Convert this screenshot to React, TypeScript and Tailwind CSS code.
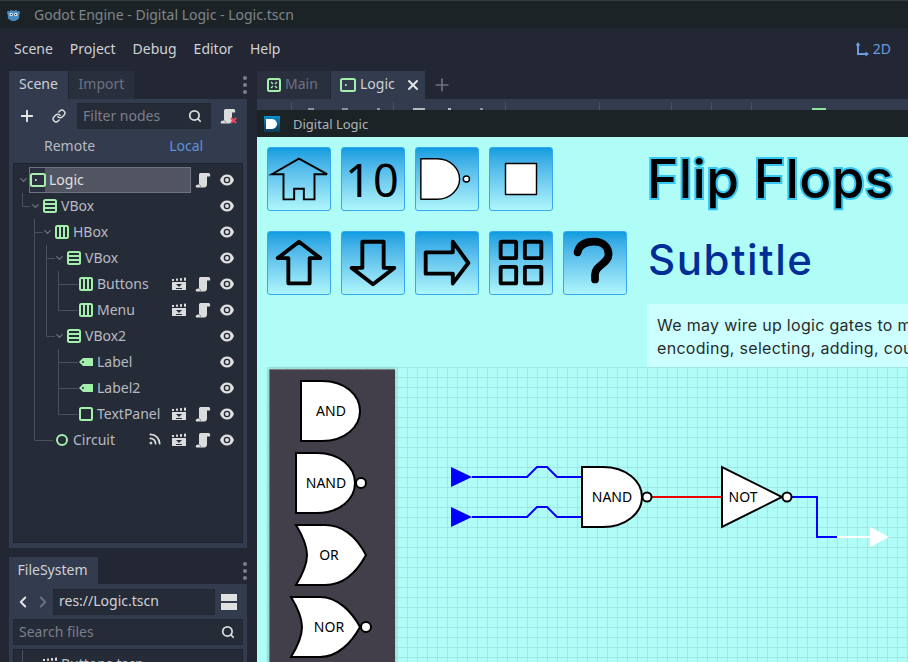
import { ChevronDown, ChevronLeft, ChevronRight, Link, Plus, Rss, Search, X } from "lucide-react";
import type { ReactNode } from "react";

const GREEN = "#a5efac";

function Control() {
  return (
    <svg width="16" height="16" viewBox="0 0 16 16" fill="none" stroke={GREEN} strokeWidth="2">
      <rect x="1" y="2" width="14" height="12" rx="1.5" />
      <rect x="5" y="7" width="1.6" height="2" fill={GREEN} stroke="none" />
    </svg>
  );
}

function VBoxIcon() {
  return (
    <svg width="16" height="16" viewBox="0 0 16 16" fill="none" stroke={GREEN} strokeWidth="2">
      <rect x="2" y="2" width="12" height="12" rx="1.5" />
      <path d="M2 6h12M2 10h12" />
    </svg>
  );
}

function HBoxIcon() {
  return (
    <svg width="16" height="16" viewBox="0 0 16 16" fill="none" stroke={GREEN} strokeWidth="2">
      <rect x="2" y="2" width="12" height="12" rx="1.5" />
      <path d="M6 2v12M10 2v12" />
    </svg>
  );
}

function LabelIcon() {
  return (
    <svg width="16" height="16" viewBox="0 0 16 16">
      <path d="M1 8l4-4h9.500a.5.5 0 0 1 .5.5v7a.5.5 0 0 1-.5.5H5z" fill={GREEN} />
      <circle cx="5" cy="8" r="1" fill="#262b38" />
    </svg>
  );
}

function PanelIcon() {
  return (
    <svg width="16" height="16" viewBox="0 0 16 16" fill="none" stroke={GREEN} strokeWidth="2">
      <rect x="2" y="2" width="12" height="12" rx="1.5" />
    </svg>
  );
}

function CircleIcon() {
  return (
    <svg width="16" height="16" viewBox="0 0 16 16" fill="none" stroke={GREEN} strokeWidth="2">
      <circle cx="8" cy="8" r="5" />
    </svg>
  );
}

function Eye() {
  return (
    <svg width="16" height="16" viewBox="0 0 16 16" fill="none">
      <path d="M1 8c1.500-3.700 4-5.500 7-5.500s5.500 1.800 7 5.500c-1.500 3.700-4 5.500-7 5.500s-5.500-1.800-7-5.500z" fill="#e0e0e0" />
      <circle cx="8" cy="8" r="3.300" fill="#262b38" />
      <circle cx="8" cy="8" r="1.900" fill="#e0e0e0" />
    </svg>
  );
}

function Script() {
  return (
    <svg width="16" height="16" viewBox="0 0 16 16">
      <path
        d="M5.500 1H13.500C15 1 15.500 2.500 15 4.500H12V12.500C12 14 11 15.500 9.500 15.500H1.500C.7 15.500 .5 14.500 1 13.500C1.500 12.700 3 12.500 4 12.500V3C4 2 4.500 1 5.500 1Z"
        fill="#dcdcdc"
      />
      <path d="M4 12.500c1 .2 1.600 1 1.800 3" stroke="#8d8d8d" strokeWidth="1" fill="none" />
    </svg>
  );
}

function Clapper() {
  return (
    <svg width="16" height="16" viewBox="0 0 16 16">
      <path d="M1 3h2v2H1zM5 2.700l2-.3v2.300H5zM9 2.200l2-.3v2.800H9zM13 1.700l2-.3v3.300h-2z" fill="#dcdcdc" />
      <path d="M1 6h14v8H1z" fill="#dcdcdc" />
      <path d="M5 8h6l-3 3z" fill="#262b38" />
      <path d="M5 12h6v1H5z" fill="#262b38" />
    </svg>
  );
}

function Dots() {
  return (
    <div className="flex flex-col gap-[3px]">
      <span className="h-[4px] w-[4px] rounded-full bg-[#7a7f8b]" />
      <span className="h-[4px] w-[4px] rounded-full bg-[#7a7f8b]" />
      <span className="h-[4px] w-[4px] rounded-full bg-[#7a7f8b]" />
    </div>
  );
}

type Row = {
  label: string;
  pad: string;
  icon: ReactNode;
  arrow?: boolean;
  signal?: boolean;
  scene?: boolean;
  script?: boolean;
  selected?: boolean;
};

const rows: Row[] = [
  { label: "Logic", pad: "pl-1", icon: <Control />, arrow: true, script: true, selected: true },
  { label: "VBox", pad: "pl-4", icon: <VBoxIcon />, arrow: true },
  { label: "HBox", pad: "pl-7", icon: <HBoxIcon />, arrow: true },
  { label: "VBox", pad: "pl-10", icon: <VBoxIcon />, arrow: true },
  { label: "Buttons", pad: "pl-[52px]", icon: <HBoxIcon />, scene: true, script: true },
  { label: "Menu", pad: "pl-[52px]", icon: <HBoxIcon />, scene: true, script: true },
  { label: "VBox2", pad: "pl-10", icon: <VBoxIcon />, arrow: true },
  { label: "Label", pad: "pl-[52px]", icon: <LabelIcon /> },
  { label: "Label2", pad: "pl-[52px]", icon: <LabelIcon /> },
  { label: "TextPanel", pad: "pl-[52px]", icon: <PanelIcon />, scene: true, script: true },
  { label: "Circuit", pad: "pl-7", icon: <CircleIcon />, signal: true, scene: true, script: true },
];

function TreeRow({ row }: { row: Row }) {
  return (
    <div className={`relative flex h-[26px] items-center pr-[3px] ${row.pad}`}>
      {row.selected && (
        <div className="absolute top-0 bottom-0 left-[15px] w-[162px] border border-[#6e7483] bg-[#515561]">
          <div className="h-full w-[15px] bg-[#2b3040]" />
        </div>
      )}
      <span className="relative flex w-[11px] justify-center">
        {row.arrow && <ChevronDown size={12} strokeWidth={3} className="text-[#6d717c]" />}
      </span>
      <span className="relative ml-px">{row.icon}</span>
      <span className={`relative ml-[3px] pb-px ${row.selected ? "text-[#e0e0e0]" : "text-[#b8bac1]"}`}>{row.label}</span>
      <div className="relative ml-auto flex">
        {row.signal && (
          <span className="flex w-6 justify-center">
            <Rss size={14} strokeWidth={3} className="text-[#dcdcdc]" />
          </span>
        )}
        {row.scene && (
          <span className="flex w-6 justify-center">
            <Clapper />
          </span>
        )}
        {row.script && (
          <span className="flex w-6 justify-center">
            <Script />
          </span>
        )}
        <span className="flex w-6 justify-center">
          <Eye />
        </span>
      </div>
    </div>
  );
}

function SceneDock() {
  return (
    <section className="flex h-[477px] shrink-0 flex-col">
      <div className="flex h-[28px] items-center">
        <div className="flex h-full w-[59px] items-center justify-center bg-[#333b4f] pb-[2px] text-[#cfd1d6]">Scene</div>
        <div className="ml-px flex h-full w-[65px] items-center justify-center bg-[#2a2f3e] pb-[2px] text-[#6d7282]">Import</div>
        <div className="ml-auto">
          <Dots />
        </div>
      </div>
      <div className="flex flex-1 flex-col bg-[#333b4f] px-[4px] pb-[5px]">
        <div className="flex h-[34px] items-center">
          <Plus size={18} strokeWidth={2.500} className="ml-[5px] text-[#e6e6e6]" />
          <Link size={14} strokeWidth={2.500} className="ml-[16px] text-[#dcdcdc]" />
          <div className="ml-[11px] flex h-[26px] w-[134px] items-center justify-between border border-[#232733] bg-[#262b38] pr-[8px] pl-[5px] text-[#7b7f8c]">
            <span>Filter nodes</span>
            <Search size={14} strokeWidth={3} className="text-[#dcdcdc]" />
          </div>
          <div className="relative ml-[9px]">
            <Script />
            <svg className="absolute right-[-1px] bottom-[0px]" width="7" height="7" viewBox="0 0 7 7" stroke="#e8495e" strokeWidth="2">
              <path d="M1 1L6 6M6 1L1 6" />
            </svg>
          </div>
        </div>
        <div className="flex h-[30px] items-center pb-[4px]">
          <span className="ml-[31px] text-[#b8bac1]">Remote</span>
          <span className="ml-[74px] text-[#5f90d8]">Local</span>
        </div>
        <div className="relative flex-1 border border-[#1f2330] bg-[#262b38] pt-[3px]">
          <svg
            className="absolute top-0 left-0 overflow-visible"
            width="230"
            height="300"
            viewBox="14 164 230 300"
            fill="none"
            stroke="#4b505c"
          >
            <path d="M22.500 193V206.500H30M34.500 219V440.500H53M34.500 232.500H43M46.500 245V336.500H55M46.500 258.500H55M58.500 271V310.500H78M58.500 284.500H78M58.500 349V414.500H78M58.500 362.500H78M58.500 388.500H78" />
          </svg>
          {rows.map((row, i) => (
            <TreeRow key={i} row={row} />
          ))}
        </div>
      </div>
    </section>
  );
}

function FileDock() {
  return (
    <section className="mt-[9px] flex min-h-0 flex-1 flex-col overflow-hidden">
      <div className="flex h-[27px] shrink-0 items-center">
        <div className="flex h-full w-[89px] items-center justify-center bg-[#333b4f] pr-[2px] pb-[2px] text-[#cfd1d6]">FileSystem</div>
        <div className="ml-auto">
          <Dots />
        </div>
      </div>
      <div className="flex flex-1 flex-col bg-[#333b4f] px-[4px]">
        <div className="flex h-[35px] shrink-0 items-center">
          <ChevronLeft size={18} strokeWidth={2.500} className="ml-px text-[#e6e6e6]" />
          <ChevronRight size={18} strokeWidth={2.500} className="ml-[2px] text-[#6d7282]" />
          <div className="ml-px flex h-[26px] w-[162px] items-center border border-[#232733] bg-[#262b38] pb-px pl-[5px] text-[#d0d2d7]">
            res://Logic.tscn
          </div>
          <div className="ml-[6px] flex flex-col gap-[2px]">
            <span className="h-[7px] w-[16px] bg-[#e0e0e0]" />
            <span className="h-[7px] w-[16px] bg-[#e0e0e0]" />
          </div>
        </div>
        <div className="flex h-[26px] shrink-0 items-center justify-between border border-[#232733] bg-[#262b38] pr-[7px] pb-px pl-[5px] text-[#7b7f8c]">
          <span>Search files</span>
          <Search size={14} strokeWidth={3} className="text-[#dcdcdc]" />
        </div>
        <div className="relative mt-[4px] flex-1 border border-[#1f2330] bg-[#262b38] pt-[6px] pl-[28px]">
          <span className="absolute top-0 bottom-0 left-[8px] w-px bg-[#4b505c]" />
          <div className="flex items-center gap-[3px] text-[#b8bac1]">
            <Clapper />
            <span>Buttons.tscn</span>
          </div>
        </div>
      </div>
    </section>
  );
}

function GameButton({ children }: { children: ReactNode }) {
  return (
    <button className="flex h-[64px] w-[64px] items-center justify-center overflow-hidden rounded-[3px] border border-[#38a8ee] bg-gradient-to-b from-[#0a9de0] to-[#aef6fb]">
      {children}
    </button>
  );
}

function Ico({ children }: { children: ReactNode }) {
  return (
    <svg width="64" height="64" viewBox="0 0 64 64" fill="none" stroke="#000" strokeLinejoin="round">
      {children}
    </svg>
  );
}

function ButtonRows() {
  return (
    <div className="flex flex-col gap-[20px]">
      <div className="flex gap-[10px]">
        <GameButton>
          <Ico>
            <path strokeWidth="2" strokeLinejoin="miter" d="M32 11L4 27H16V53H27V42H37V53H48V27H61Z" />
          </Ico>
        </GameButton>
        <GameButton>
          <span className="text-[45px] leading-none tracking-[2px] text-black">10</span>
        </GameButton>
        <GameButton>
          <Ico>
            <path strokeWidth="1.500" fill="#fff" d="M5 11H22C36 11 45 22 45 32C45 42 36 53 22 53H5Z" />
            <circle cx="52" cy="32" r="3.200" fill="#fff" strokeWidth="1.500" />
          </Ico>
        </GameButton>
        <GameButton>
          <Ico>
            <rect x="16" y="16" width="32" height="32" fill="#fff" strokeWidth="1.500" />
          </Ico>
        </GameButton>
      </div>
      <div className="flex gap-[10px]">
        <GameButton>
          <Ico>
            <path strokeWidth="4" d="M32 10L10 27H21V53H43V27H54Z" />
          </Ico>
        </GameButton>
        <GameButton>
          <Ico>
            <path strokeWidth="4" d="M21 10H43V37H54L32 54L10 37H21Z" />
          </Ico>
        </GameButton>
        <GameButton>
          <Ico>
            <path strokeWidth="4" d="M10 21H38V10L54 32L38 53V43H10Z" />
          </Ico>
        </GameButton>
        <GameButton>
          <Ico>
            <g strokeWidth="4">
              <rect x="11" y="10" width="16" height="17" rx="1" />
              <rect x="36" y="10" width="17" height="17" rx="1" />
              <rect x="11" y="36" width="16" height="17" rx="1" />
              <rect x="36" y="36" width="17" height="17" rx="1" />
            </g>
          </Ico>
        </GameButton>
        <GameButton>
          <Ico>
            <path strokeWidth="8" strokeLinecap="round" d="M14 21C16 12 24 10 31 10C41 10 46 16 46 23C46 33 32 34 32 44V49" />
          </Ico>
        </GameButton>
      </div>
    </div>
  );
}

function Gate({ children, label, x, y }: { children: ReactNode; label: string; x: number; y: number }) {
  return (
    <svg width="90" height="60" viewBox={`287 ${y} 90 60`} className="overflow-visible" fill="#fff" stroke="#000" strokeWidth="2">
      {children}
      <text
        x={x}
        y={y + 35}
        textAnchor="middle"
        fill="#000"
        stroke="none"
        fontSize="14"
        fontFamily="Noto Sans, sans-serif"
      >
        {label}
      </text>
    </svg>
  );
}

function Palette() {
  return (
    <aside className="relative mt-[2px] ml-[2px] flex h-full w-[126px] flex-col items-center gap-[12px] border-t border-l border-[#7b7a80] bg-[#423f4a] pt-[11px] pr-[2px] shadow-[0_0_3px_rgba(0,0,0,0.3)]">
      <Gate label="AND" x={331} y={381}>
        <path d="M301 381H322C345 381 360 395 360 411C360 427 345 441 322 441H301Z" />
      </Gate>
      <Gate label="NAND" x={326} y={453}>
        <path d="M296 453H317C340 453 355 467 355 483C355 499 340 513 317 513H296Z" />
        <circle cx="361" cy="483" r="5" />
      </Gate>
      <Gate label="OR" x={329} y={525}>
        <path d="M296 525H325C345 525 358 540 366 555C358 570 345 585 325 585H296C304 572 307 563 307 555C307 547 304 538 296 525Z" />
      </Gate>
      <Gate label="NOR" x={329} y={597}>
        <path d="M291 597H320C338 597 352 612 360 627C352 642 338 657 320 657H291C299 644 302 635 302 627C302 619 299 610 291 597Z" />
        <circle cx="366" cy="627" r="5" />
      </Gate>
    </aside>
  );
}

function Circuit() {
  return (
    <svg
      className="absolute top-0 left-0"
      width="641"
      height="295"
      viewBox="267 367 641 295"
      fill="none"
      strokeLinejoin="miter"
    >
      <g stroke="#0000ff" strokeWidth="2">
        <path d="M472 477H527L537 467H547L557 477H582" />
        <path d="M472 517H527L537 507H547L557 517H582" />
        <path d="M792 497H817V537H837" />
      </g>
      <path d="M451 467V487L472 477Z M451 507V527L472 517Z" fill="#0000ff" />
      <path d="M652 497H722" stroke="#ee0000" strokeWidth="2" />
      <path d="M837 537H870" stroke="#fff" strokeWidth="2" />
      <path d="M870 527V547L889 537Z" fill="#fff" />
      <g fill="#fff" stroke="#000" strokeWidth="2">
        <path d="M582 467H603C626 467 642 481 642 497C642 513 626 527 603 527H582Z" />
        <circle cx="647" cy="497" r="4.500" />
        <path d="M722 467V527L782 497Z" />
        <circle cx="787" cy="497" r="4.500" />
      </g>
      <g fill="#000" fontSize="14" fontFamily="Noto Sans, sans-serif" textAnchor="middle">
        <text x="612" y="502">NAND</text>
        <text x="743" y="502">NOT</text>
      </g>
    </svg>
  );
}

function GameWindow() {
  return (
    <div className="flex min-h-0 flex-1 flex-col overflow-hidden">
      <div className="flex h-[27px] shrink-0 items-center bg-[#1b2326] pl-[7px]">
        <div className="flex h-[16px] w-[16px] items-center justify-center bg-gradient-to-b from-[#0a8fd0] to-[#0c3a55]">
          <svg width="12" height="10" viewBox="0 0 12 10">
            <path d="M0 0H6C9 0 11 3 11 5C11 7 9 10 6 10H0Z" fill="#fff" />
          </svg>
        </div>
        <span className="ml-[13px] pt-px text-[13px] text-[#aeb4b8]">Digital Logic</span>
      </div>
      <div className="flex min-h-0 flex-1 flex-col overflow-hidden bg-[#b0fdf8]">
        <div className="flex h-[230px] shrink-0 pt-[10px] pl-[10px]">
          <ButtonRows />
          <div className="ml-[22px] flex flex-col font-['Inter',sans-serif] whitespace-nowrap">
            <h1 className="-ml-[2px] h-[84px] pt-[4px] text-[53px] leading-[56px] font-medium tracking-[0.4px] text-black [-webkit-text-stroke:4px_#35c6f4] [paint-order:stroke_fill]">
              Flip Flops
            </h1>
            <h2 className="-ml-px h-[73px] text-[42px] leading-[58px] font-medium tracking-[1.6px] text-[#002d96]">Subtitle</h2>
            <p className="-ml-[2px] h-[63px] w-[400px] bg-[#ccffff] pt-[10px] pl-[10px] text-[16px] leading-[23px] tracking-[0.3px] text-[#2b2b2b]">
              We may wire up logic gates to make
              <br />
              encoding, selecting, adding, counting
            </p>
          </div>
        </div>
        <div className="relative ml-[10px] flex-1 bg-[linear-gradient(#9fe7e2_1px,transparent_1px),linear-gradient(90deg,#9fe7e2_1px,transparent_1px)] bg-[size:10px_10px]">
          <Palette />
          <Circuit />
        </div>
      </div>
    </div>
  );
}

function Editor() {
  return (
    <main className="flex min-h-0 min-w-0 flex-1 flex-col">
      <div className="flex h-[28px] shrink-0 items-center">
        <div className="flex h-full w-[73px] items-center gap-[3px] bg-[#2a2f3e] pl-[9px] text-[#6d7282]">
          <svg width="16" height="16" viewBox="0 0 16 16" fill="none" stroke={GREEN} strokeWidth="2">
            <rect x="2" y="2" width="12" height="12" rx="1.500" />
            <path d="M5 5l2 2M11 5L9 7M5 11l2-2M11 11L9 9" strokeWidth="1.300" />
          </svg>
          <span className="pb-[2px]">Main</span>
        </div>
        <div className="ml-px flex h-full w-[94px] items-center bg-[#333b4f] pl-[9px] text-[#cfd1d6]">
          <Control />
          <span className="ml-[4px] pb-[2px]">Logic</span>
          <X size={16} strokeWidth={3} className="ml-[10px] text-[#e6e6e6]" />
        </div>
        <Plus size={20} strokeWidth={2} className="ml-[7px] text-[#6d7282]" />
      </div>
      <div className="flex h-[11px] shrink-0 items-end bg-[#333b4f] pl-[34px]">
        <span className="h-[8px] w-px bg-[#4a5164]" />
        <span className="ml-[16px] h-[2px] w-[6px] bg-[#8d909b]" />
        <span className="ml-[28px] h-[2px] w-[6px] bg-[#8d909b]" />
        <span className="ml-[29px] h-[2px] w-[3px] bg-[#8d909b]" />
        <span className="ml-[13px] h-[8px] w-px bg-[#4a5164]" />
        <span className="ml-[19px] h-[2px] w-[12px] bg-[#b8bac1]" />
        <span className="ml-[23px] h-[2px] w-[3px] bg-[#b8bac1]" />
        <span className="ml-[29px] h-[2px] w-[3px] bg-[#8d909b]" />
        <span className="ml-[22px] h-[8px] w-px bg-[#4a5164]" />
        <span className="ml-[93px] h-[8px] w-px bg-[#4a5164]" />
        <span className="ml-[71px] h-[8px] w-px bg-[#4a5164]" />
        <span className="ml-[39px] h-[8px] w-px bg-[#4a5164]" />
        <span className="ml-[39px] h-[8px] w-px bg-[#4a5164]" />
        <span className="ml-[60px] h-[2px] w-[14px] bg-[#8fe39a]" />
      </div>
      <GameWindow />
    </main>
  );
}

export default function App() {
  return (
    <div className="flex h-[662px] w-[908px] flex-col overflow-hidden bg-[#232733] font-['Noto_Sans',sans-serif] text-[14px] leading-none">
      <header className="flex h-[28px] shrink-0 items-center border-t border-[#343b3e] bg-[#1c2327] pl-[6px]">
        <svg width="15" height="15" viewBox="0 0 16 16">
          <path d="M1 5l2-1 1 1 1-2 2 1h2l2-1 1 2 1-1 2 1-1 4v3c-2 2-4 3-6 3s-4-1-6-3v-3z" fill="#478cbf" />
          <circle cx="5.500" cy="8" r="1.800" fill="#fff" />
          <circle cx="10.500" cy="8" r="1.800" fill="#fff" />
          <circle cx="5.700" cy="8" r=".9" fill="#333" />
          <circle cx="10.300" cy="8" r=".9" fill="#333" />
        </svg>
        <span className="ml-[13px] text-[#7f8689]">Godot Engine - Digital Logic - Logic.tscn</span>
      </header>
      <nav className="flex h-[43px] shrink-0 items-center pr-[17px] pb-[2px] pl-[14px] text-[#d0d2d7]">
        <span>Scene</span>
        <span className="ml-[17px]">Project</span>
        <span className="ml-[17px]">Debug</span>
        <span className="ml-[17px]">Editor</span>
        <span className="ml-[17px]">Help</span>
        <div className="ml-auto flex items-center gap-[3px] text-[#6b9be0]">
          <svg width="16" height="16" viewBox="0 0 16 16" fill="none" stroke="#6b9be0" strokeWidth="2">
            <path d="M4 3V13H14" />
            <path d="M4 1L1.500 4.500H6.500Z M15 13L11.500 10.500V15.500Z" fill="#6b9be0" stroke="none" />
          </svg>
          2D
        </div>
      </nav>
      <div className="flex min-h-0 flex-1">
        <div className="ml-[9px] flex w-[238px] shrink-0 flex-col">
          <SceneDock />
          <FileDock />
        </div>
        <div className="ml-[10px] flex min-w-0 flex-1">
          <Editor />
        </div>
      </div>
    </div>
  );
}
